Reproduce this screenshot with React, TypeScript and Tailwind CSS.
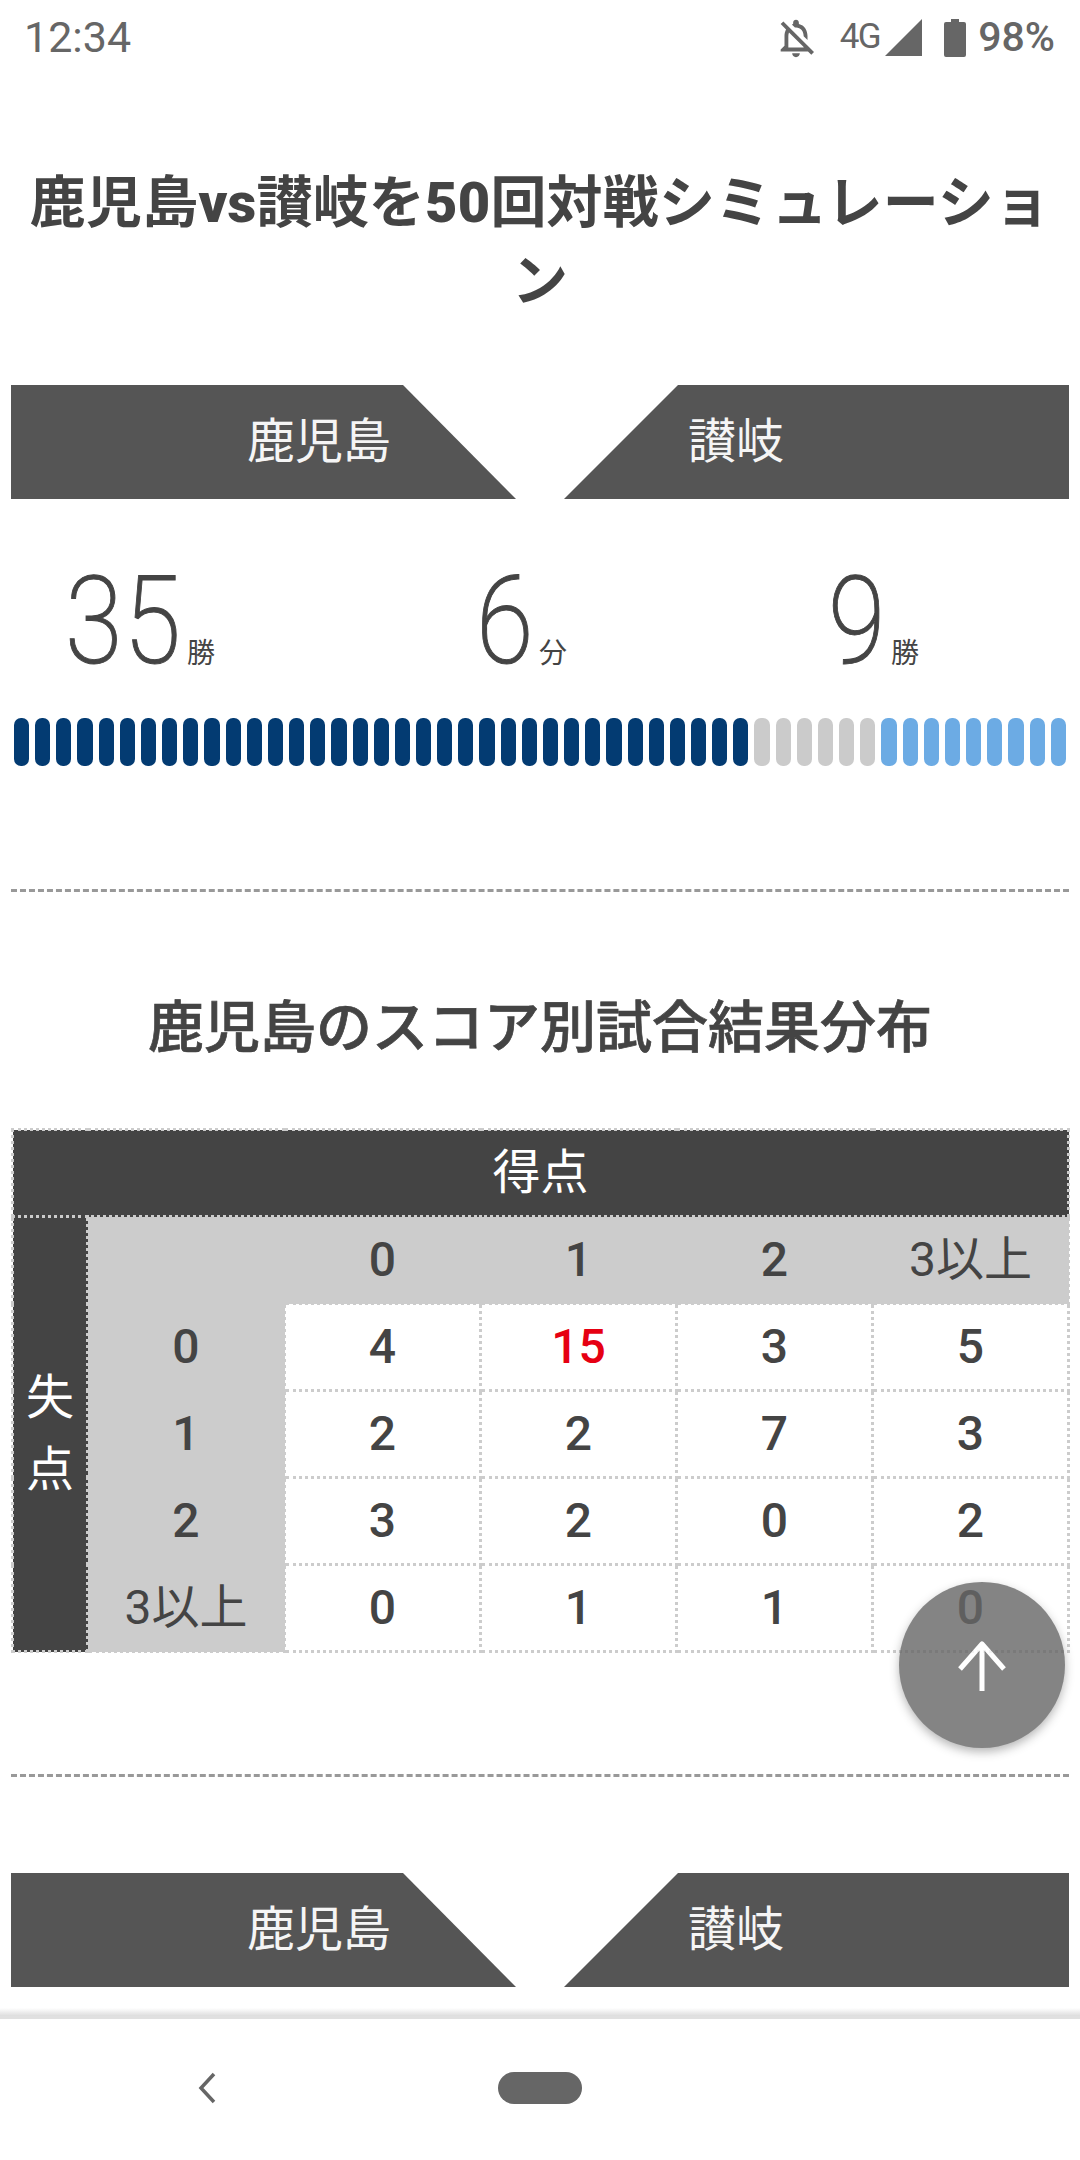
import type { ReactNode } from "react";

const cols = ["0", "1", "2", "3以上"];

const rows = [
  { label: "0", values: ["4", "15", "3", "5"] },
  { label: "1", values: ["2", "2", "7", "3"] },
  { label: "2", values: ["3", "2", "0", "2"] },
  { label: "3以上", values: ["0", "1", "1", "0"] },
];

const bars = [
  ...Array(35).fill("bg-[#033b72]"),
  ...Array(6).fill("bg-[#cbcbcb]"),
  ...Array(9).fill("bg-[#6cabe4]"),
];

function StatusBar() {
  return (
    <div className="flex h-[72px] shrink-0 items-center justify-between pl-[24px] pr-[25px] pt-[3px] text-[41px] text-[#666]">
      <span className="text-[43px]">12:34</span>
      <div className="flex items-center">
        <svg viewBox="0 0 24 24" className="h-[46px] w-[46px] fill-[#666]">
          <path d="M12 22c1.1 0 2-.9 2-2h-4c0 1.1.9 2 2 2zm0-15.5c2.49 0 4 2.02 4 4.5v.1l2 2V11c0-3.07-1.63-5.64-4.5-6.32V4c0-.83-.67-1.5-1.5-1.5s-1.5.67-1.5 1.5v.68c-.24.06-.47.15-.69.23l1.64 1.64c.18-.02.36-.05.55-.05zM5.41 3.35L4 4.76l2.81 2.81C6.29 8.57 6 9.74 6 11v5l-2 2v1h14.24l1.74 1.74 1.41-1.41L5.41 3.35zM16 17H8v-6c0-.68.12-1.32.34-1.9L16 16.76V17z" />
        </svg>
        <span className="ml-[21px] mr-[5px] text-[35px] tracking-[-1.5px]">4G</span>
        <svg viewBox="0 0 37 37" className="h-[37px] w-[37px] fill-[#666]">
          <path d="M37 0V37H0Z" />
        </svg>
        <svg viewBox="0 0 22 38" className="ml-[22px] h-[38px] w-[22px] fill-[#666]">
          <path d="M7 0H15V3H20Q22 3 22 5V36Q22 38 20 38H2Q0 38 0 36V5Q0 3 2 3H7Z" />
        </svg>
        <span className="ml-[12px] font-medium">98%</span>
      </div>
    </div>
  );
}

function TeamBanner({ className = "" }: { className?: string }) {
  return (
    <div className={`flex justify-between px-[11px] ${className}`}>
      <div className="flex h-[114px] w-[505px] items-center justify-end bg-[#555] pr-[125px] text-[48px] text-[#f5f5f5] [clip-path:polygon(0_0,392px_0,100%_100%,0_100%)]">
        鹿児島
      </div>
      <div className="flex h-[114px] w-[505px] items-center bg-[#555] pl-[124px] text-[48px] text-[#f5f5f5] [clip-path:polygon(114px_0,100%_0,100%_100%,0_100%)]">
        讃岐
      </div>
    </div>
  );
}

function Stat({ value, unit }: { value: string; unit: string }) {
  const wide = value.length > 1;
  return (
    <div className="flex items-baseline">
      <div className={wide ? "w-[127px]" : "w-[64px]"}>
        <span className="inline-block origin-left scale-x-[0.85] whitespace-nowrap text-[123px] font-extralight leading-none tracking-[1px] [-webkit-text-stroke:1px_#444]">
          {value}
        </span>
      </div>
      <span className={`text-[28px] leading-none ${wide ? "ml-[-5px]" : "ml-[-1px]"}`}>{unit}</span>
    </div>
  );
}

function Divider({ className = "" }: { className?: string }) {
  return <div className={`mx-[11px] border-t-[3px] border-dashed border-[#999] ${className}`} />;
}

function Cell({ children, className = "" }: { children?: ReactNode; className?: string }) {
  return (
    <td className={`h-[87px] border-[3px] border-dotted border-[#ccc] p-0 text-center align-middle ${className}`}>
      {children}
    </td>
  );
}

function ResultTable() {
  return (
    <table className="ml-[11px] mt-[61px] w-[1056px] table-fixed border-collapse text-[48px] font-medium text-[#444]">
      <colgroup>
        <col className="w-[75px]" />
        <col className="w-[197px]" />
        <col className="w-[196px]" />
        <col className="w-[196px]" />
        <col className="w-[196px]" />
        <col className="w-[196px]" />
      </colgroup>
      <tbody>
        <tr>
          <td colSpan={6} className="h-[87px] border-[3px] border-dotted border-[#ccc] bg-[#444] p-0 text-center font-normal text-white">
            得点
          </td>
        </tr>
        <tr>
          <td rowSpan={5} className="border-[3px] border-dotted border-[#ccc] bg-[#444] p-0 text-center font-normal leading-[72px] text-white">
            失<br />点
          </td>
          <Cell className="bg-[#ccc]" />
          {cols.map((c) => (
            <Cell key={c} className={`bg-[#ccc] ${c.length > 1 ? "font-normal" : ""}`}>
              {c}
            </Cell>
          ))}
        </tr>
        {rows.map((row) => (
          <tr key={row.label}>
            <Cell className={`bg-[#ccc] ${row.label.length > 1 ? "font-normal" : ""}`}>{row.label}</Cell>
            {row.values.map((v, i) => (
              <Cell key={i} className={`bg-white ${v === "15" ? "text-[#e60012]" : ""}`}>
                {v}
              </Cell>
            ))}
          </tr>
        ))}
      </tbody>
    </table>
  );
}

export default function App() {
  return (
    <div className="relative flex h-[2160px] w-[1080px] flex-col overflow-hidden bg-white text-[#444] [font-family:Roboto,'Noto_Sans_CJK_JP',sans-serif]">
      <StatusBar />

      <div className="min-h-0 flex-1 overflow-hidden">
        <h1 className="mx-[28px] mt-[92px] text-center text-[56px] font-bold leading-[78px] tracking-[0.2px]">
          鹿児島<span className="font-black">vs</span>讃岐を<span className="font-black">50</span>回対戦シミュレーション
        </h1>

        <TeamBanner className="mt-[65px]" />

        <div className="mt-[74px] flex h-[110px] items-end gap-[261px] pl-[65px]">
          <Stat value="35" unit="勝" />
          <Stat value="6" unit="分" />
          <Stat value="9" unit="勝" />
        </div>

        <div className="mx-[11px] mt-[35px] flex h-[48px]">
          {bars.map((color, i) => (
            <div key={i} className="flex-1 px-[3px]">
              <div className={`h-full rounded-[7px] ${color}`} />
            </div>
          ))}
        </div>

        <Divider className="mt-[123px]" />

        <h2 className="mt-[97px] text-center text-[56px] font-medium leading-[78px] [-webkit-text-stroke:0.7px_#444]">
          鹿児島のスコア別試合結果分布
        </h2>

        <ResultTable />

        <Divider className="mt-[121px]" />

        <TeamBanner className="mt-[96px]" />
      </div>

      <div className="h-[8px] shrink-0 bg-gradient-to-b from-white to-[#ddd]" />
      <div className="h-[3px] shrink-0 bg-[#e0e0e0]" />

      <div className="relative flex h-[141px] shrink-0 items-center justify-center">
        <svg viewBox="0 0 18 32" className="absolute left-[198px] top-[53px] h-[32px] w-[18px] fill-none stroke-[#666] stroke-[3.5]">
          <path d="M16 2 3 16 16 30" />
        </svg>
        <div className="absolute left-[498px] top-[53px] h-[32px] w-[84px] rounded-full bg-[#666]" />
      </div>

      <button className="absolute left-[899px] top-[1582px] flex h-[166px] w-[166px] items-center justify-center rounded-full bg-[#666] opacity-80 shadow-[0_4px_10px_rgba(0,0,0,0.35)]">
        <svg viewBox="0 0 60 60" className="h-[60px] w-[60px] fill-none stroke-white stroke-[5] [stroke-linejoin:round]">
          <path d="M30 9V56M8 34 30 9 52 34" />
        </svg>
      </button>
    </div>
  );
}
